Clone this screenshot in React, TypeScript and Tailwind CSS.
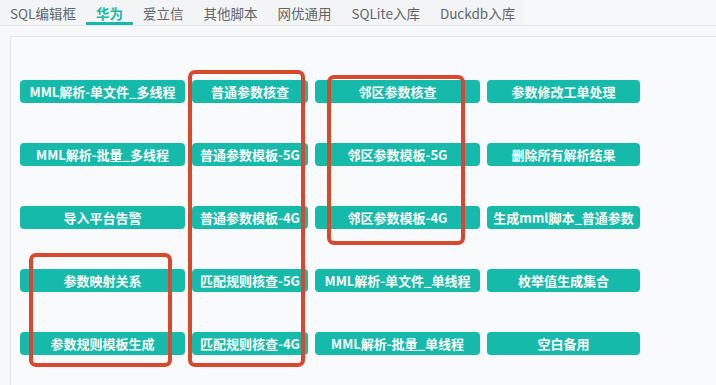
import React from "react";

const tabs = ["SQL编辑框", "华为", "爱立信", "其他脚本", "网优通用", "SQLite入库", "Duckdb入库"];

const rows: string[][] = [
  ["MML解析-单文件_多线程", "普通参数核查", "邻区参数核查", "参数修改工单处理"],
  ["MML解析-批量_多线程", "普通参数模板-5G", "邻区参数模板-5G", "删除所有解析结果"],
  ["导入平台告警", "普通参数模板-4G", "邻区参数模板-4G", "生成mml脚本_普通参数"],
  ["参数映射关系", "匹配规则核查-5G", "MML解析-单文件_单线程", "枚举值生成集合"],
  ["参数规则模板生成", "匹配规则核查-4G", "MML解析-批量_单线程", "空白备用"],
];

const widths = ["w-[165px]", "w-[116px]", "w-[165px]", "w-[153px]"];

export default function App() {
  return (
    <div
      className="relative w-[716px] h-[385px] overflow-hidden bg-[#f7f8fa]"
      style={{ fontFamily: '"Noto Sans CJK SC", "Noto Sans", sans-serif' }}
    >
      <div className="flex h-[26px] border-b border-[#e4e6ea]">
        <div className="flex bg-[#f3f4f6]">
          {tabs.map((t, i) => (
            <div
              key={t}
              className={
                i === 1
                  ? "px-[10px] h-[25px] pt-[3px] leading-[20px] text-[13.5px] font-bold text-[#16baaa] border-b-[3px] border-[#16baaa]"
                  : "px-[10px] h-[25px] pt-[3px] leading-[20px] text-[13.5px] text-[#62666b]"
              }
            >
              {t}
            </div>
          ))}
        </div>
      </div>
      <div className="ml-[10px] mt-[10px] h-[400px] border-t border-l border-[#e4e6ea] bg-[#f9fafb] pt-[43px] pl-[9px]">
        <div className="flex flex-col gap-[40px]">
          {rows.map((r, ri) => (
            <div key={ri} className="flex gap-[7px]">
              {r.map((b, bi) => (
                <div
                  key={bi}
                  className={`${widths[bi]} h-[23px] rounded-[4px] bg-[#16baaa] text-white font-bold text-[13px] leading-[23px] text-center whitespace-nowrap overflow-hidden`}
                >
                  {b}
                </div>
              ))}
            </div>
          ))}
        </div>
      </div>
      <div className="absolute left-[188px] top-[70px] w-[117px] h-[297px] border-[4px] border-[#d7482c] rounded-[7px]" />
      <div className="absolute left-[327px] top-[75px] w-[138px] h-[170px] border-[4px] border-[#d7482c] rounded-[7px]" />
      <div className="absolute left-[29px] top-[253px] w-[143px] h-[114px] border-[4px] border-[#d7482c] rounded-[7px]" />
    </div>
  );
}
